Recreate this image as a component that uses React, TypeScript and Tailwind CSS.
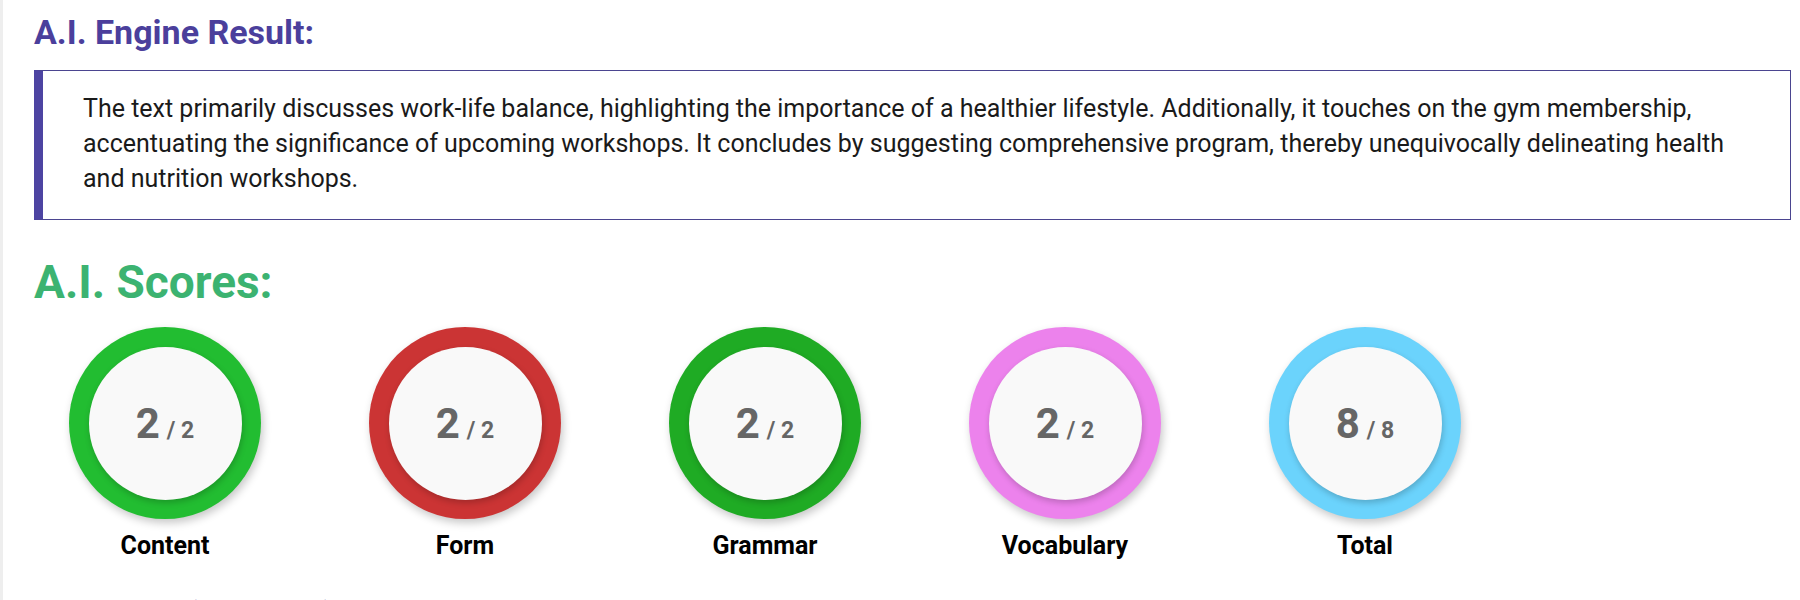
import React from "react";

const scores = [
  { label: "Content", score: 2, max: 2, ring: "bg-[#22bd31]" },
  { label: "Form", score: 2, max: 2, ring: "bg-[#cb3434]" },
  { label: "Grammar", score: 2, max: 2, ring: "bg-[#1fab24]" },
  { label: "Vocabulary", score: 2, max: 2, ring: "bg-[#ec82ec]" },
  { label: "Total", score: 8, max: 8, ring: "bg-[#6bd3fc]" },
];

function ScoreCircle({ label, score, max, ring }: (typeof scores)[number]) {
  return (
    <div className="flex w-[192px] flex-col items-center">
      <div
        className={`flex h-[192px] w-[192px] items-center justify-center rounded-full shadow-[2px_4px_8px_rgba(0,0,0,0.22)] ${ring}`}
      >
        <div className="flex h-[153px] w-[153px] items-center justify-center rounded-full bg-[#f9f9f9] shadow-[1px_3px_6px_rgba(0,0,0,0.2)]">
          <span className="font-bold text-[#666666]">
            <span className="text-[42px]">{score}</span>
            <span className="ml-[7px] text-[23px]">/ {max}</span>
          </span>
        </div>
      </div>
      <div className="mt-[12px] text-[25px] font-bold leading-[30px] text-black">
        {label}
      </div>
    </div>
  );
}

export default function App() {
  return (
    <div className="min-h-screen border-l-[3px] border-[#eeeeee] bg-white pl-[31px] pr-[9px] pt-[12px] font-['Roboto',sans-serif]">
      <h2 className="text-[34px] font-bold leading-[40px] text-[#4b3f9c]">
        A.I. Engine Result:
      </h2>

      <div className="mt-[18px] border border-l-[9px] border-[#4b4590] border-l-[#4d44a2] bg-white pt-[20px] pb-[23px] pl-[40px] pr-[40px]">
        <p className="text-[25px] leading-[35px] text-[#1a1a1a]">
          The text primarily discusses work-life balance, highlighting the
          importance of a healthier lifestyle. Additionally, it touches on the
          gym membership, accentuating the significance of upcoming workshops.
          It concludes by suggesting comprehensive program, thereby
          unequivocally delineating health and nutrition workshops.
        </p>
      </div>

      <h2 className="mt-[35px] text-[46px] font-bold leading-[54px] text-[#3cb371]">
        A.I. Scores:
      </h2>

      <div className="mt-[18px] flex gap-[108px] pl-[35px]">
        {scores.map((s) => (
          <ScoreCircle key={s.label} {...s} />
        ))}
      </div>

      <h2 className="mt-[33px] text-[34px] font-bold leading-[40px] text-[#4b3f9c]">
        Sentence (Detailed) Analysis:
      </h2>
    </div>
  );
}
